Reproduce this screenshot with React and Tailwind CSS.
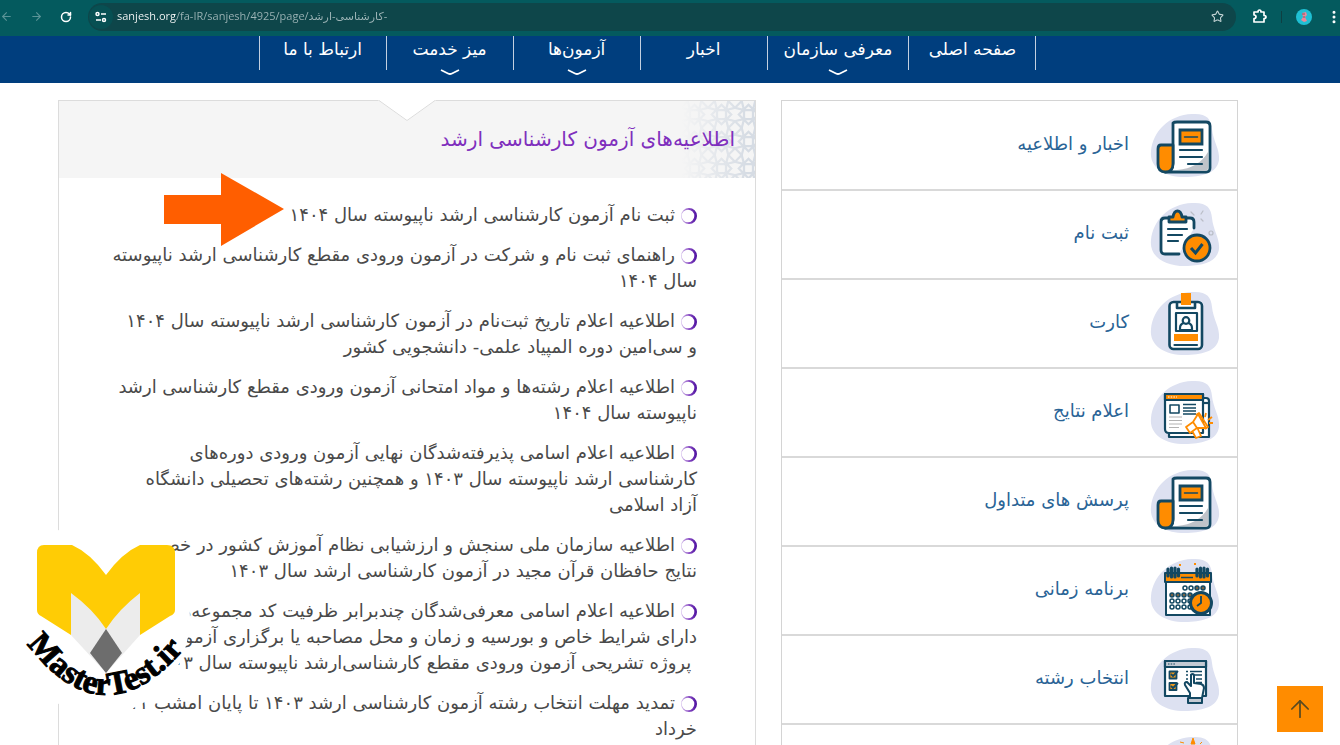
import { ArrowLeft, ArrowRight, ArrowUp, EllipsisVertical, RotateCw, Star } from 'lucide-react';

const navItems = [
  { label: 'صفحه اصلی' },
  { label: 'معرفی سازمان', hasMenu: true },
  { label: 'اخبار' },
  { label: 'آزمون‌ها', hasMenu: true },
  { label: 'میز خدمت', hasMenu: true },
  { label: 'ارتباط با ما' },
];

const notices = [
  ['ثبت نام آزمون کارشناسی ارشد ناپیوسته سال ۱۴۰۴'],
  ['راهنمای ثبت نام و شرکت در آزمون ورودی مقطع کارشناسی ارشد ناپیوسته', 'سال ۱۴۰۴'],
  ['اطلاعیه اعلام تاریخ ثبت‌نام در آزمون کارشناسی ارشد ناپیوسته سال ۱۴۰۴', 'و سی‌امین دوره المپیاد علمی- دانشجویی کشور'],
  ['اطلاعیه اعلام رشته‌ها و مواد امتحانی آزمون ورودی مقطع کارشناسی ارشد', 'ناپیوسته سال ۱۴۰۴'],
  ['اطلاعیه اعلام اسامی پذیرفته‌شدگان نهایی آزمون ورودی دوره‌های', 'کارشناسی ارشد ناپیوسته سال ۱۴۰۳ و همچنین رشته‌های تحصیلی دانشگاه', 'آزاد اسلامی'],
  ['اطلاعیه سازمان ملی سنجش و ارزشیابی نظام آموزش کشور در خصوص', 'نتایج حافظان قرآن مجید در آزمون کارشناسی ارشد سال ۱۴۰۳'],
  ['اطلاعیه اعلام اسامی معرفی‌شدگان چندبرابر ظرفیت کد مجموعه‌های', 'دارای شرایط خاص و بورسیه و زمان و محل مصاحبه یا برگزاری آزمون', '\u00a0پروژه تشریحی آزمون ورودی مقطع کارشناسی‌ارشد ناپیوسته سال ۱۴۰۳'],
  ['تمدید مهلت انتخاب رشته آزمون کارشناسی ارشد ۱۴۰۳ تا پایان امشب ۱۱', 'خرداد'],
];

const NAVY = '#134862';
const ORANGE = '#ff8c00';

const Blob = () => (
  <path d="M2 38C4 18 20 2 43 1c14-1 19 4 20 15 1 12 8 20 7 31-2 13-15 16-31 17C18 65 0 56 2 38Z" fill="#dde1f1" />
);

const NewsIcon = () => (
  <g stroke={NAVY} strokeWidth="2.8" strokeLinejoin="round" strokeLinecap="round">
    <path d="M24 10q1-1 4-1h29q4 0 4 4v42q0 4-4 4H16q8-1 8-9Z" fill="#fff" />
    <path d="M28 57q22-2 31-18v16q0 3-3 3Z" fill="#bfc3c9" stroke="none" />
    <path d="M24 32H12q-3 0-3 4v15q0 8 7.500 8T24 51Z" fill={ORANGE} />
    <path d="M31 17h22v14H31Z" fill={ORANGE} strokeLinejoin="miter" />
    <path d="M35.500 24h13" strokeWidth="1.500" />
    <path d="M31 37h22M31 44h22M39 51h14" strokeWidth="2.200" />
  </g>
);

const RegisterIcon = () => (
  <g stroke={NAVY} strokeWidth="2.800" strokeLinejoin="round" strokeLinecap="round" fill="none">
    <path d="M21 16h-5q-4 0-4 4v28q0 4 4 4h14l14-24v-8q0-4-4-4Z" fill="#fff" stroke="none" />
    <path d="M30 52H16q-4 0-4-4V20q0-4 4-4h4M36 16h5q4 0 4 4v6" />
    <path d="M20 20v-5h4q1-6 4.500-6t4.500 6h4v5Z" fill={ORANGE} />
    <path d="M19 27h19M19 33h14M19 39h10" strokeWidth="2.200" />
    <circle cx="48" cy="46" r="13" fill={ORANGE} />
    <path d="m42 46 4.500 5 7-9" strokeWidth="3" strokeLinecap="butt" strokeLinejoin="miter" />
    <g stroke="#b9bdc6" strokeWidth="1.200">
      <path d="m42 10 3 3m7-1 2-3m-2 8 2 2" />
      <circle cx="62" cy="31" r="2" />
    </g>
  </g>
);

const CardIcon = () => (
  <g stroke={NAVY} strokeWidth="2.200" strokeLinejoin="round" fill="none">
    <rect x="20.500" y="11" width="32.500" height="47" rx="4" fill="#fff" strokeWidth="2.600" />
    <path d="M28 11v6h18v-6" strokeWidth="2.600" />
    <path d="M32 2h10v12H32Z" fill={ORANGE} stroke="none" />
    <path d="M27 22h21v18H27Z" />
    <path d="M31 39v-2q0-4 4-5m-4 7h12v-2q0-4-4-5" />
    <circle cx="37" cy="29.500" r="3.300" />
    <path d="M25 43h24v7H25Z" fill={ORANGE} stroke="none" />
    <path d="M25.500 54H48" strokeLinecap="round" />
  </g>
);

const ResultsIcon = () => (
  <g stroke={NAVY} strokeWidth="2.200" strokeLinejoin="round" fill="none">
    <path d="M54 18h3q3 0 3 3v36H20v-4" fill="#fff" />
    <path d="M54 23h6" />
    <path d="M16 14h38v39H20q-4 0-4-4Z" fill="#fff" />
    <path d="M16 14h38v6H16Z" fill={ORANGE} />
    <path d="M19 17h9" stroke="#fff" strokeWidth="1.200" strokeDasharray="1.500 1.200" />
    <path d="M21 25h9v8h-9Z" strokeWidth="1.600" />
    <path d="M34 24.500h13M34 28h13M34 31h13M34 34h13" strokeWidth="1.400" />
    <path d="M20 37h13M20 40.500h13M20 44h13M20 47.500h10" stroke="#b2b2b2" strokeWidth="1" />
    <g stroke={ORANGE} strokeWidth="1.800">
      <path d="M42 49l5 9 5-2-4-9Z" fill="#fff" />
      <path d="m37 47 7-5 5-8 8 14-9 0-7 5Z" fill="#fff" />
      <path d="m44 42 4 6M47 35l3-2 9 14-3 2" />
      <path d="m56 37 1-4m2 7 4-3m-3 6h4" />
    </g>
  </g>
);

const ScheduleIcon = () => (
  <g stroke={NAVY} strokeWidth="2" strokeLinejoin="round" fill="none">
    <path d="M17 22h44v35H17Z" fill="#fff" />
    <path d="M16 15h46v9H16Z" fill={ORANGE} />
    <path d="M19 11v7M22.500 10v9M26 10v9M29.500 11v7M48 11v7M51.500 10v9M55 10v9M58.500 11v7" strokeWidth="3.200" strokeLinecap="round" />
    <path d="M32 19.500h12" strokeWidth="1.500" />
    <g strokeWidth="1.500">
      {[36, 42, 48, 54].map((x) => (
        <circle key={x} cx={x} cy="30" r="2" fill={x > 44 ? '#776246' : '#fff'} />
      ))}
      {[23, 29, 35, 41].map((x) => (
        <g key={x}>
          <circle cx={x} cy="37" r="2" fill="#776246" />
          <circle cx={x} cy="43" r="2" />
          <circle cx={x} cy="49" r="2" />
        </g>
      ))}
    </g>
    <circle cx="52" cy="45" r="10.500" fill={ORANGE} strokeWidth="3" />
    <path d="M52 38v7l-4 3" strokeWidth="1.800" />
    <path d="M30 7h2M45 6h2" stroke={ORANGE} />
  </g>
);

const ChoiceIcon = () => (
  <g stroke={NAVY} strokeWidth="2.200" strokeLinejoin="round" fill="none">
    <path d="M16 14h41v35H16Z" fill="#fff" />
    <path d="M16 14h41v6H16Z" fill="#c4cad3" />
    <path d="M19 17h8" strokeWidth="1.200" strokeDasharray="1.500 1.200" />
    <path d="M20.500 24.500h7v7h-7ZM20.500 36h7v7h-7Z" fill="#f39a1b" strokeWidth="1.800" />
    <path d="m22 27 2 2 5-5m-7 15 2 2 5-5" strokeWidth="1.800" />
    <path d="M37 24.500h2m2 0h12M37 28h2m2 0h12M37 32h2m8 0h6M37 35.500h2m8 0h6" strokeWidth="1.500" />
    <path d="M41 46l-5-8q-1-3 2-3l4 4V29q0-2 1.500-2t1.500 2v7l7 1q3 1 3 4l-2 10H41Z" fill="#fff" strokeWidth="2" />
    <path d="M39 51h14v5H39Z" fill="#c4cad3" strokeWidth="2" />
  </g>
);

const SparkIcon = () => (
  <path d="m44 2 2 6h-4Zm-13 4 4 1m18-1-2 2" fill={ORANGE} stroke={ORANGE} />
);

const services = [
  { label: 'اخبار و اطلاعیه', Icon: NewsIcon },
  { label: 'ثبت نام', Icon: RegisterIcon },
  { label: 'کارت', Icon: CardIcon },
  { label: 'اعلام نتایج', Icon: ResultsIcon },
  { label: 'پرسش های متداول', Icon: NewsIcon },
  { label: 'برنامه زمانی', Icon: ScheduleIcon },
  { label: 'انتخاب رشته', Icon: ChoiceIcon },
  { label: '', Icon: SparkIcon },
];

const BrowserBar = () => (
  <header dir="ltr" className="flex h-9 shrink-0 items-center bg-[#045a5e] pb-[3px] font-['Open_Sans','DejaVu_Sans',sans-serif]">
    <button aria-label="Back" className="w-[22px] text-[#5b9497]"><ArrowLeft size={13} /></button>
    <button aria-label="Forward" className="flex w-7 justify-center text-[#5b9497]"><ArrowRight size={13} /></button>
    <button aria-label="Reload" className="flex w-8 justify-center text-white"><RotateCw size={12} strokeWidth={3} /></button>
    <div className="ml-[6px] flex h-7 flex-1 items-center gap-1 rounded-full bg-[#0e464a] pr-3 pl-px">
      <button aria-label="Site information" className="flex size-6 items-center justify-center rounded-full bg-[#075053] text-white">
        <svg width="12" height="12" viewBox="0 0 12 12" fill="none" stroke="currentColor" strokeWidth="1.500">
          <circle cx="2.500" cy="3" r="1.500" />
          <path d="M6 3h5M1 9h5" />
          <circle cx="9" cy="9" r="1.500" />
        </svg>
      </button>
      <input
        aria-label="Address"
        defaultValue="sanjesh.org/fa-IR/sanjesh/4925/page/کارشناسی-ارشد-"
        className="min-w-0 flex-1 bg-[linear-gradient(to_right,#ffffff_59px,#9fb6b8_59px)] bg-clip-text text-[11px] text-transparent outline-none"
      />
      <button aria-label="Bookmark" className="text-[#c5d5d6]"><Star size={13} /></button>
    </div>
    <div className="flex items-center gap-[14px] pl-4">
      <button aria-label="Extensions" className="text-white">
        <svg width="15" height="15" viewBox="0 0 15 15" fill="none" stroke="currentColor" strokeWidth="1.700" strokeLinejoin="round">
          <path d="M2 3h4q0-2 1.500-2T9 3h3v3.500q2 0 2 1.500t-2 1.500V13H2V9.500q2 0 2-1.700T2 6Z" />
        </svg>
      </button>
      <span className="h-3 w-px bg-[#0e3f42]" />
      <button aria-label="Profile" className="flex size-4 items-center justify-center rounded-full bg-[#1fc0d4]">
        <svg width="12" height="12" viewBox="0 0 12 12"><path d="M4 2l4-1 1 3-2 2 2 4-3 1-3-2 2-3Z" fill="#e7899b" /><path d="M4 3h3M5 6h2" stroke="#8d5260" /></svg>
      </button>
      <button aria-label="Menu" className="-mr-0.5 text-white"><EllipsisVertical size={16} strokeWidth={2.5} /></button>
    </div>
  </header>
);

const NavBar = () => (
  <nav className="flex h-[47px] shrink-0 justify-center bg-[#003e7e] pr-[103px] pl-[58px]">
    <ul className="flex h-[34px] border-r border-[#c3d0e0]">
      {navItems.map((item) => (
        <li key={item.label} className="relative min-w-[127px] border-l border-[#c3d0e0] px-4 text-center">
          <a href="#" className="block text-[17px] leading-[26px] whitespace-nowrap text-white">{item.label}</a>
          {item.hasMenu && (
            <svg className="absolute inset-x-0 top-[33px] mx-auto" width="20" height="7" viewBox="0 0 20 7" fill="none" stroke="#fff" strokeWidth="1.800">
              <path d="m1 1 7 3.500q2 1 4 0L19 1" />
            </svg>
          )}
        </li>
      ))}
    </ul>
  </nav>
);

const ServiceList = () => (
  <ul className="w-[457px] shrink-0 border border-[#d4d4d4] pt-px">
    {services.map(({ label, Icon }, i) => (
      <li key={i} className="h-[89px] border-b-2 border-[#d9d9d9]">
        <a href="#" aria-label={label || 'خدمات'} className="flex h-full items-center gap-5 pr-4 text-lg text-[#2a6496]">
          <svg width="72" height="66" viewBox="0 0 72 66">
            <Blob />
            <Icon />
          </svg>
          <span className="pb-1">{label}</span>
        </a>
      </li>
    ))}
  </ul>
);

const Ring = () => (
  <svg className="ml-[6px] inline-block align-middle" width="16" height="16" viewBox="0 0 16 16">
    <defs>
      <linearGradient id="ring">
        <stop offset="0" stopColor="#d9c6ee" />
        <stop offset="0.500" stopColor="#8a4cc4" />
        <stop offset="1" stopColor="#4b0f9e" />
      </linearGradient>
    </defs>
    <path fillRule="evenodd" fill="url(#ring)" d="M8 0a8 8 0 1 1 0 16A8 8 0 0 1 8 0ZM7 1.700a6.300 6.300 0 1 0 0 12.600A6.300 6.300 0 0 0 7 1.700Z" />
  </svg>
);

const HeadPattern = () => (
  <svg className="absolute top-0 right-0" width="74" height="77">
    <defs>
      <pattern id="girih" width="36" height="36" patternUnits="userSpaceOnUse" patternTransform="scale(0.75)">
        <path
          d="M0 9 9 0M27 0l9 9M0 27l9 9M36 27l-9 9M9 0l3 12L0 9M27 0l-3 12 12-3M0 27l12-3-3 12M36 27l-12-3 3 12M12 12h12v12H12ZM18 5l13 13-13 13L5 18Z"
          fill="none"
          stroke="#d6dce4"
          strokeWidth="3"
        />
      </pattern>
      <linearGradient id="headFade">
        <stop offset="0" stopColor="#f5f5f5" />
        <stop offset="0.900" stopColor="#f5f5f5" stopOpacity="0" />
      </linearGradient>
    </defs>
    <rect width="74" height="77" fill="url(#girih)" />
    <rect width="74" height="77" fill="url(#headFade)" />
  </svg>
);

const Notices = () => (
  <section className="relative min-w-0 flex-1 border border-[#dcdcdc] pb-10">
    <div className="relative flex h-[77px] items-center bg-[#f5f5f5] pr-5">
      <HeadPattern />
      <svg className="absolute inset-x-0 -top-px mx-auto" width="58" height="22" viewBox="0 0 58 22">
        <path d="M0 0 29 21 58 0Z" fill="#fff" />
        <path d="m1 .5 28 20 28-20" fill="none" stroke="#dcdcdc" />
      </svg>
      <h2 className="relative pb-0.5 text-xl text-[#7f2fbd]">اطلاعیه‌های آزمون کارشناسی ارشد</h2>
    </div>
    <ul className="flex flex-col gap-[14px] pt-6 pr-[58px] text-lg leading-[26px] text-[#4a4a4a]">
      {notices.map((lines) => (
        <li key={lines[0]}>
          <a href="#" className="block">
            {lines.map((line, i) => (
              <span key={line} className="block whitespace-nowrap">
                {i === 0 && <Ring />}
                {line}
              </span>
            ))}
          </a>
        </li>
      ))}
    </ul>
    <svg className="absolute top-[72px] left-[105px]" width="120" height="73" viewBox="0 0 120 73">
      <path d="M0 22h57V0l63 36-63 37V51H0Z" fill="#ff5e00" />
    </svg>
  </section>
);

const Watermark = () => (
  <div dir="ltr" className="absolute bottom-7 left-1">
    <svg width="206" height="198" viewBox="4 519 206 198" role="img" aria-label="MasterTest.ir">
      <ellipse cx="100" cy="617" rx="90" ry="98" fill="#fff" />
      <path d="M44 545h28q18 8 34 30 16-22 34-30h27q8 0 8 8v57q0 4-5 6l-30 19H71l-30-19q-4-2-4-6v-57q0-8 7-8Z" fill="#ffcc05" />
      <path d="M71 593q22 16 35 36 13-20 34-36v42l-34 38-35-38Z" fill="#ececec" />
      <path d="m106 629 16 24-16 20-16-20Z" fill="#6d6d6d" />
      <path id="brandArc" d="M27 644Q106 747 190 642" fill="none" />
      <text className="font-['Liberation_Serif',serif] text-[33px] font-bold" fill="#000" stroke="#000" strokeWidth="1">
        <textPath href="#brandArc">MasterTest.ir</textPath>
      </text>
    </svg>
  </div>
);

export default function App() {
  return (
    <div dir="rtl" lang="fa" className="relative flex h-screen flex-col overflow-hidden bg-white font-['DejaVu_Sans',sans-serif]">
      <BrowserBar />
      <NavBar />
      <main className="flex min-h-0 flex-1 items-start gap-[25px] pt-[17px] pr-[102px] pl-[58px]">
        <ServiceList />
        <Notices />
      </main>
      <Watermark />
      <button aria-label="بازگشت به بالا" className="absolute right-[17px] bottom-[13px] flex size-[46px] items-center justify-center bg-[#ff8c00] text-[#5a4a20]">
        <ArrowUp size={28} strokeWidth={1.5} />
      </button>
    </div>
  );
}
